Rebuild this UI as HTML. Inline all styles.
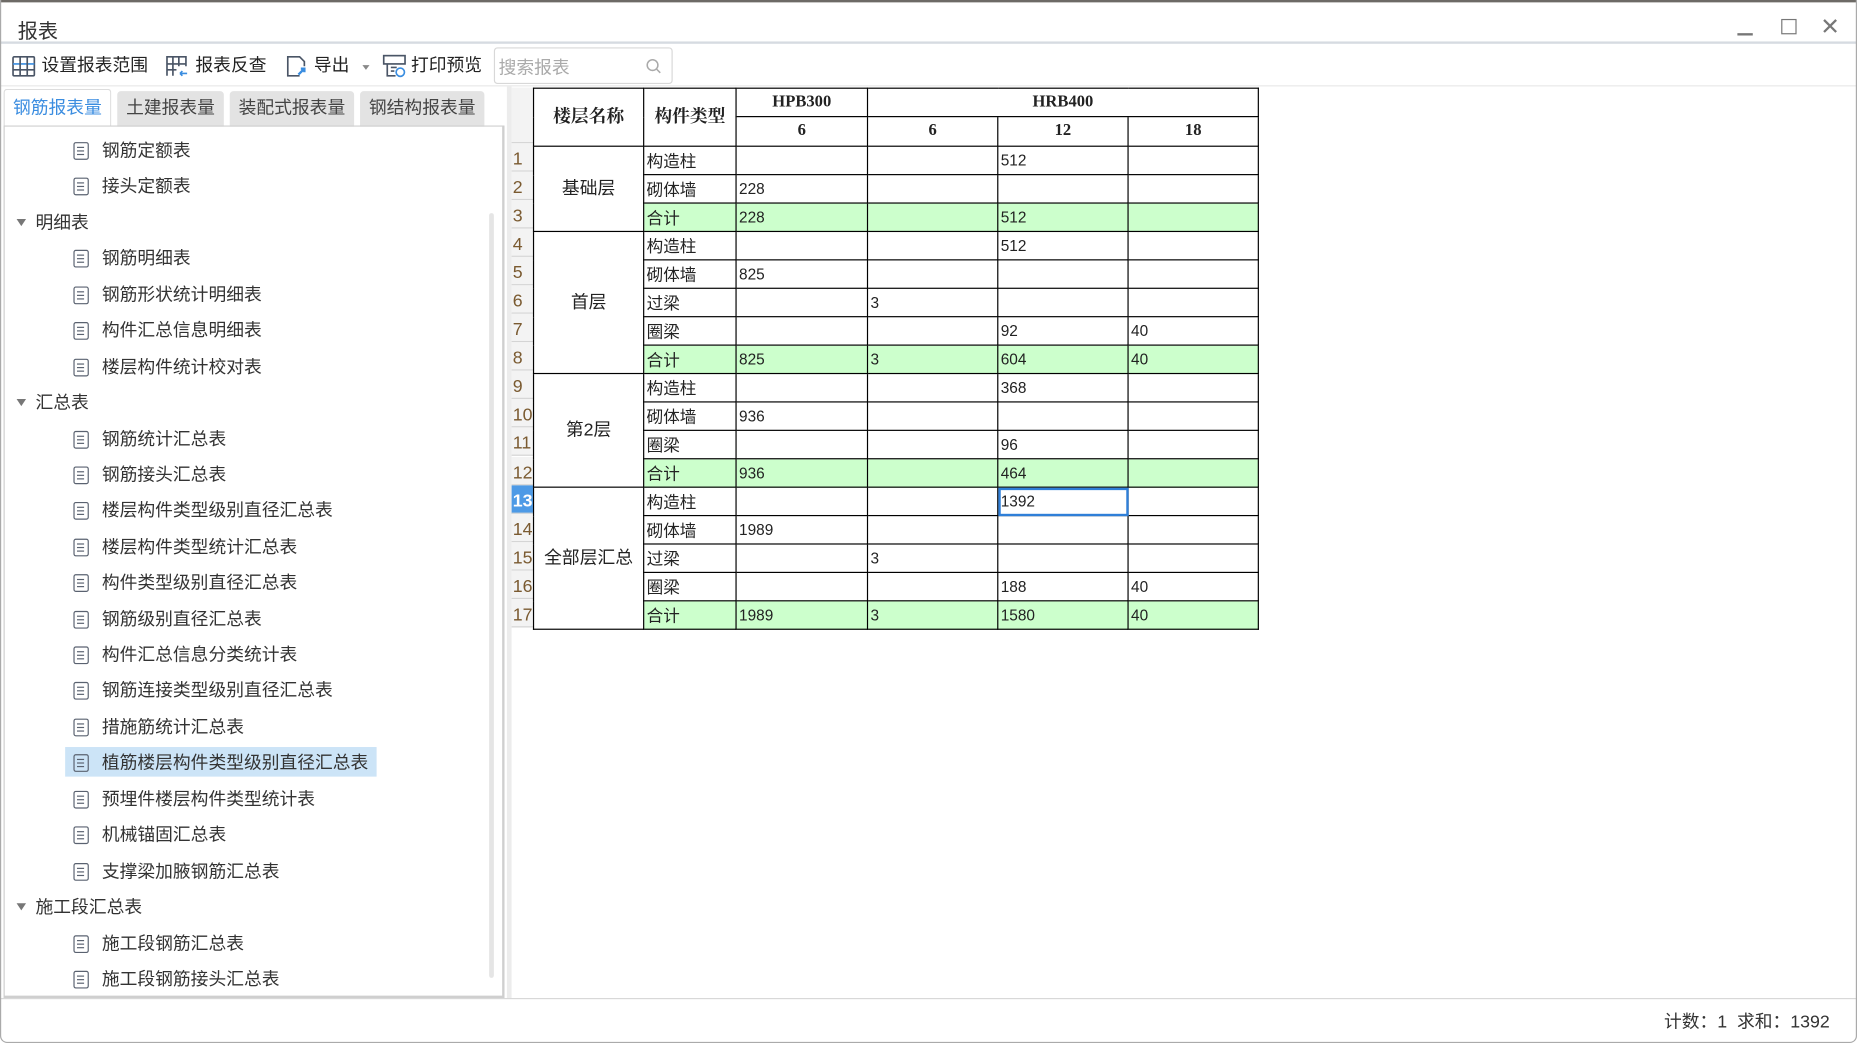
<!DOCTYPE html>
<html><head><meta charset="utf-8">
<style>
*{margin:0;padding:0;box-sizing:border-box}
html,body{width:1857px;height:1043px;overflow:hidden;background:#fff}
#w{position:absolute;left:0;top:0;width:1568px;height:881px;transform:scale(1.18431,1.18388);transform-origin:0 0;font-family:"Liberation Sans","Noto Sans CJK SC",sans-serif;color:#222;background:#fff}
.a{position:absolute}
.it{position:absolute;height:26px;line-height:26px;font-size:15px;color:#333;white-space:nowrap;margin-top:2px}
.ic{position:absolute;left:62px;top:5px;width:13px;height:15px;border:1.5px solid #5a6270;border-radius:2px;background:linear-gradient(#5a6270,#5a6270) 2px 3px/6px 1.3px no-repeat,linear-gradient(#5a6270,#5a6270) 2px 6px/6px 1.3px no-repeat,linear-gradient(#5a6270,#5a6270) 2px 9px/6px 1.3px no-repeat}
.tx{position:absolute;left:86px;top:0}
.g{position:absolute;left:14px;height:26px;line-height:26px;font-size:15px;color:#333;margin-top:2px}
.g:before{content:"";display:inline-block;border-left:4px solid transparent;border-right:4px solid transparent;border-top:6px solid #777;margin-right:8px;vertical-align:2px}
table{border-collapse:collapse;position:absolute;left:450px;top:74px;table-layout:fixed;font-size:14px}
td{border:1px solid #000;height:24px;padding:0 2px;white-space:nowrap;font-size:14px;line-height:20px}
.h td{font-weight:bold;text-align:center;font-family:"Liberation Serif","Noto Serif CJK SC",serif}
.gr{background:#ccffcc}
.n{font-family:"Liberation Sans",sans-serif;font-size:13px}
.rn{position:absolute;left:432px;width:18px;height:24.06px;border-bottom:1px solid #d4d4d4;background:#f3f3f3;color:#7a5a30;font-size:15px;line-height:28px;text-align:left;padding-left:1px}
.tb{position:absolute;top:44px;font-size:15px;color:#222;height:24px;line-height:24px}
.tab{position:absolute;top:77px;height:30px;line-height:30px;font-size:15px;text-align:center;background:#e3e3e3;color:#444;border-radius:3px 3px 0 0}
</style></head><body><div id="w">
<div class="a" style="left:0;top:0;width:1568px;height:2px;background:#6d6a66"></div>
<div class="a" style="left:15px;top:12px;font-size:17px;color:#333">报表</div>
<div class="a" style="left:1467px;top:28px;width:13px;height:1.5px;background:#777"></div>
<div class="a" style="left:1504px;top:16px;width:13px;height:13px;border:1.5px solid #777"></div>
<div class="a" style="left:1537px;top:14px;font-size:20px;color:#777;line-height:18px">✕</div>
<div class="a" style="left:0;top:35px;width:1568px;height:2px;background:#d6dbe1"></div>
<svg class="a" style="left:10px;top:46px" width="20" height="20" viewBox="0 0 20 20" fill="none" stroke="#4a5566" stroke-width="1.4"><rect x="1" y="2" width="18" height="16" rx="1"/><line x1="1" y1="8" x2="19" y2="8" stroke="#3a8de0"/><line x1="1" y1="13" x2="19" y2="13"/><line x1="7" y1="2" x2="7" y2="18"/><line x1="13" y1="2" x2="13" y2="18"/></svg>
<div class="tb" style="left:35px">设置报表范围</div>
<svg class="a" style="left:140px;top:46px" width="20" height="20" viewBox="0 0 20 20" fill="none" stroke="#4a5566" stroke-width="1.4"><path d="M1 18V2h16v8M1 8h16M1 13h8M6 2v16M11 2v8"/><path d="M12 16h6M12 16l2-2M12 16l2 2" stroke="#3a8de0"/></svg>
<div class="tb" style="left:165px">报表反查</div>
<svg class="a" style="left:241px;top:46px" width="20" height="20" viewBox="0 0 20 20" fill="none" stroke="#4a5566" stroke-width="1.4"><path d="M12 18H2V2h10l4 4v4"/><path d="M11 17l5-5M13 12h3v3" stroke="#3a8de0" stroke-width="2"/></svg>
<div class="tb" style="left:265px">导出</div>
<div class="a" style="left:306px;top:55px;border-left:3px solid transparent;border-right:3px solid transparent;border-top:4px solid #888"></div>
<svg class="a" style="left:323px;top:46px" width="20" height="20" viewBox="0 0 20 20" fill="none" stroke="#4a5566" stroke-width="1.4"><rect x="1" y="1" width="18" height="7"/><path d="M4 8v10h7M7 11h5M7 14h3"/><circle cx="15" cy="15" r="3.5" stroke="#3a8de0"/></svg>
<div class="tb" style="left:347px">打印预览</div>
<div class="a" style="left:417px;top:40px;width:151px;height:31px;border:1px solid #d8d8d8;border-radius:3px"></div>
<div class="a" style="left:421px;top:46px;font-size:15px;color:#aaa">搜索报表</div>
<svg class="a" style="left:545px;top:49px" width="14" height="14" viewBox="0 0 14 14" fill="none" stroke="#aaa" stroke-width="1.3"><circle cx="6" cy="6" r="4.5"/><path d="M9.5 9.5l3 3"/></svg>
<div class="a" style="left:0;top:72px;width:1568px;height:1px;background:#e8e8e8"></div>
<div class="tab" style="left:3px;width:91px;background:#fff;color:#3b8de0;border:1px solid #ddd;border-bottom:none;height:31px;top:75px;line-height:32px">钢筋报表量</div>
<div class="tab" style="left:99px;width:90px">土建报表量</div>
<div class="tab" style="left:194px;width:105px">装配式报表量</div>
<div class="tab" style="left:304px;width:105px">钢结构报表量</div>
<div class="a" style="left:3px;top:106px;width:423px;height:737px;border:1px solid #cfcfcf;border-right:2px solid #cfcfcf;border-bottom:2px solid #cfcfcf"></div>
<div class="a" style="left:413px;top:180px;width:4px;height:646px;background:#e5e5e5;border-radius:2px"></div>
<div class="a" style="left:428px;top:72px;width:4px;height:771px;background:#ececec"></div>
<div class="a" style="left:55px;top:631px;width:263px;height:25px;background:#cce4f7"></div>
<div class="it" style="top:113px"><span class="ic"></span><span class="tx">钢筋定额表</span></div>
<div class="it" style="top:143px"><span class="ic"></span><span class="tx">接头定额表</span></div>
<div class="g" style="top:174px">明细表</div>
<div class="it" style="top:204px"><span class="ic"></span><span class="tx">钢筋明细表</span></div>
<div class="it" style="top:235px"><span class="ic"></span><span class="tx">钢筋形状统计明细表</span></div>
<div class="it" style="top:265px"><span class="ic"></span><span class="tx">构件汇总信息明细表</span></div>
<div class="it" style="top:296px"><span class="ic"></span><span class="tx">楼层构件统计校对表</span></div>
<div class="g" style="top:326px">汇总表</div>
<div class="it" style="top:357px"><span class="ic"></span><span class="tx">钢筋统计汇总表</span></div>
<div class="it" style="top:387px"><span class="ic"></span><span class="tx">钢筋接头汇总表</span></div>
<div class="it" style="top:417px"><span class="ic"></span><span class="tx">楼层构件类型级别直径汇总表</span></div>
<div class="it" style="top:448px"><span class="ic"></span><span class="tx">楼层构件类型统计汇总表</span></div>
<div class="it" style="top:478px"><span class="ic"></span><span class="tx">构件类型级别直径汇总表</span></div>
<div class="it" style="top:509px"><span class="ic"></span><span class="tx">钢筋级别直径汇总表</span></div>
<div class="it" style="top:539px"><span class="ic"></span><span class="tx">构件汇总信息分类统计表</span></div>
<div class="it" style="top:569px"><span class="ic"></span><span class="tx">钢筋连接类型级别直径汇总表</span></div>
<div class="it" style="top:600px"><span class="ic"></span><span class="tx">措施筋统计汇总表</span></div>
<div class="it" style="top:630px"><span class="ic"></span><span class="tx">植筋楼层构件类型级别直径汇总表</span></div>
<div class="it" style="top:661px"><span class="ic"></span><span class="tx">预埋件楼层构件类型统计表</span></div>
<div class="it" style="top:691px"><span class="ic"></span><span class="tx">机械锚固汇总表</span></div>
<div class="it" style="top:722px"><span class="ic"></span><span class="tx">支撑梁加腋钢筋汇总表</span></div>
<div class="g" style="top:752px">施工段汇总表</div>
<div class="it" style="top:783px"><span class="ic"></span><span class="tx">施工段钢筋汇总表</span></div>
<div class="it" style="top:813px"><span class="ic"></span><span class="tx">施工段钢筋接头汇总表</span></div>
<div class="a" style="left:432px;top:74px;width:18px;height:47px;background:#f3f3f3;border-bottom:1px solid #d4d4d4"></div>
<div class="rn" style="top:121px">1</div><div class="rn" style="top:145px">2</div><div class="rn" style="top:169px">3</div><div class="rn" style="top:193px">4</div><div class="rn" style="top:217px">5</div><div class="rn" style="top:241px">6</div><div class="rn" style="top:265px">7</div><div class="rn" style="top:289px">8</div><div class="rn" style="top:313px">9</div><div class="rn" style="top:337px">10</div><div class="rn" style="top:361px">11</div><div class="rn" style="top:386px">12</div><div class="rn" style="top:410px;background:#4d9ae6;color:#fff;font-weight:bold">13</div><div class="rn" style="top:434px">14</div><div class="rn" style="top:458px">15</div><div class="rn" style="top:482px">16</div><div class="rn" style="top:506px">17</div>
<table>
<colgroup><col style="width:93px"><col style="width:78px"><col style="width:111px"><col style="width:110px"><col style="width:110px"><col style="width:110px"></colgroup>
<tr class="h"><td rowspan="2" style="font-size:15px">楼层名称</td><td rowspan="2" style="font-size:15px">构件类型</td><td style="height:22px">HPB300</td><td colspan="3">HRB400</td></tr>
<tr class="h"><td style="height:25px">6</td><td>6</td><td>12</td><td>18</td></tr>
<tr><td rowspan="3" style="text-align:center;font-size:15px">基础层</td><td>构造柱</td><td></td><td></td><td class="n">512</td><td></td></tr>
<tr><td>砌体墙</td><td class="n">228</td><td></td><td></td><td></td></tr>
<tr class="gr"><td>合计</td><td class="n">228</td><td></td><td class="n">512</td><td></td></tr>
<tr><td rowspan="5" style="text-align:center;font-size:15px">首层</td><td>构造柱</td><td></td><td></td><td class="n">512</td><td></td></tr>
<tr><td>砌体墙</td><td class="n">825</td><td></td><td></td><td></td></tr>
<tr><td>过梁</td><td></td><td class="n">3</td><td></td><td></td></tr>
<tr><td>圈梁</td><td></td><td></td><td class="n">92</td><td class="n">40</td></tr>
<tr class="gr"><td>合计</td><td class="n">825</td><td class="n">3</td><td class="n">604</td><td class="n">40</td></tr>
<tr><td rowspan="4" style="text-align:center;font-size:15px">第2层</td><td>构造柱</td><td></td><td></td><td class="n">368</td><td></td></tr>
<tr><td>砌体墙</td><td class="n">936</td><td></td><td></td><td></td></tr>
<tr><td>圈梁</td><td></td><td></td><td class="n">96</td><td></td></tr>
<tr class="gr"><td>合计</td><td class="n">936</td><td></td><td class="n">464</td><td></td></tr>
<tr><td rowspan="5" style="text-align:center;font-size:15px">全部层汇总</td><td>构造柱</td><td></td><td></td><td class="n" style="outline:2px solid #2f7fd8;outline-offset:-2px">1392</td><td></td></tr>
<tr><td>砌体墙</td><td class="n">1989</td><td></td><td></td><td></td></tr>
<tr><td>过梁</td><td></td><td class="n">3</td><td></td><td></td></tr>
<tr><td>圈梁</td><td></td><td></td><td class="n">188</td><td class="n">40</td></tr>
<tr class="gr"><td>合计</td><td class="n">1989</td><td class="n">3</td><td class="n">1580</td><td class="n">40</td></tr>
</table>
<div class="a" style="left:0;top:843px;width:1568px;height:1px;background:#d8d8d8"></div>
<div class="a" style="left:1405px;top:852px;font-size:15px;color:#333">计数：1&nbsp;&nbsp;求和：1392</div>
<div class="a" style="left:0;top:0;width:1568px;height:881px;border:1px solid #aaa;border-top:none;border-radius:0 0 6px 6px;pointer-events:none"></div>
</div></body></html>
